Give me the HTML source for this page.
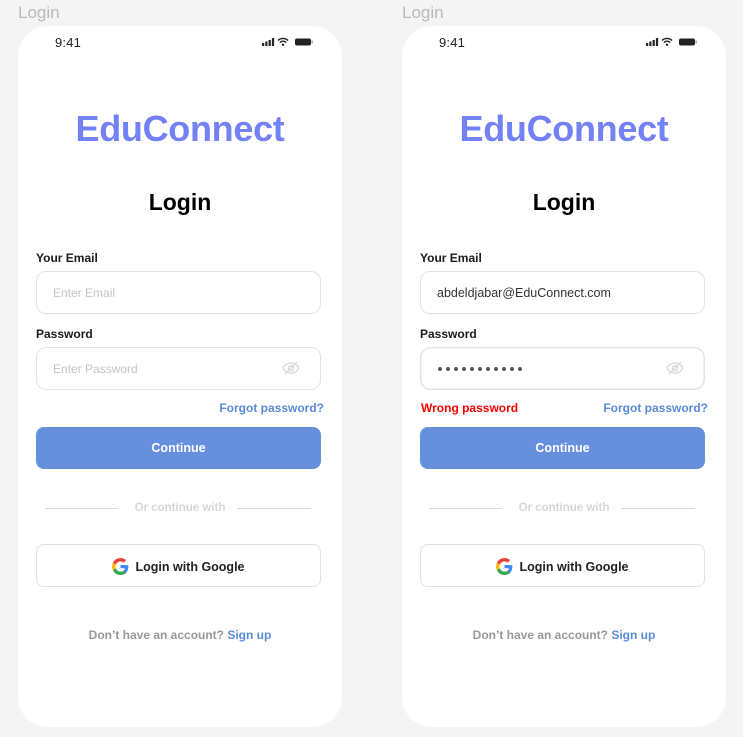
<!DOCTYPE html>
<html><head><meta charset="utf-8">
<style>
*{margin:0;padding:0;box-sizing:border-box}
body{width:743px;height:737px;background:#f4f4f4;position:relative;overflow:hidden;font-family:"Liberation Sans",sans-serif}
.cap{position:absolute;top:3px;font-size:17px;color:#b9b9b9}
.ph{position:absolute;top:26px;width:324px;height:701px;background:#fff;border-radius:30px}
.ph>*{position:absolute}
.time{left:37px;top:9px;font-size:13px;color:#222;letter-spacing:.2px}
.stat{left:244px;top:11px}
.logo{left:0;width:324px;text-align:center;top:82px;font-size:36px;font-weight:bold;color:#7381f6;letter-spacing:-.3px}
.title{left:0;width:324px;text-align:center;top:163px;font-size:23px;font-weight:bold;color:#000}
.lbl{left:18px;font-size:12px;font-weight:bold;color:#1a1a1a}
.inp{left:18px;width:285px;height:43px;border:1.5px solid #e3e3e3;border-radius:10px;font-size:12px;padding-left:16px;line-height:42px;color:#c4c4c4}
.eye{left:264px}
.link{font-size:12px;color:#5b8bdc;font-weight:bold}
.btn{left:18px;width:285px;height:42px;background:#6690de;border-radius:8px;color:#fff;font-weight:bold;font-size:12.5px;text-align:center;line-height:43px}
.line{height:1px;background:#dcdcdc;top:482px}
.or{left:0;width:324px;text-align:center;top:476px;font-size:11.5px;color:#d6d6d6;font-weight:bold}
.gbtn{left:18px;width:285px;height:43px;border:1.5px solid #e0e0e0;border-radius:8px;top:518px;font-size:12.5px;font-weight:bold;color:#222;display:flex;align-items:center;justify-content:center;gap:6px;padding-top:2px}
.foot{left:0;width:324px;text-align:center;top:602px;font-size:12px;color:#999;font-weight:bold}
.foot span{color:#5b8bdc}
</style></head><body>
<div class="cap" style="left:18px">Login</div>
<div class="cap" style="left:402px">Login</div>

<div class="ph" style="left:18px">
 <div class="time">9:41</div>
 <svg class="stat" width="52" height="10" viewBox="0 0 52 10"><rect x="0" y="6" width="2.2" height="3" fill="#222"/><rect x="3.3" y="4.5" width="2.2" height="4.5" fill="#222"/><rect x="6.6" y="3" width="2.2" height="6" fill="#222"/><rect x="9.9" y="1" width="2.2" height="8" fill="#222"/><path d="M16 3.5a7 7 0 0 1 10 0M17.8 5.5a4.5 4.5 0 0 1 6.4 0" stroke="#222" stroke-width="1.4" fill="none"/><circle cx="21" cy="7.8" r="1.2" fill="#222"/><rect x="33" y="1.5" width="16" height="7" rx="2" fill="#222"/><rect x="49.5" y="3.5" width="1.3" height="3" fill="#999"/></svg>
 <div class="logo">EduConnect</div>
 <div class="title">Login</div>
 <div class="lbl" style="top:225px">Your Email</div>
 <div class="inp" style="top:245px">Enter Email</div>
 <div class="lbl" style="top:301px">Password</div>
 <div class="inp" style="top:321px">Enter Password</div>
 <svg class="eye" style="top:335px" width="18" height="14" viewBox="0 0 18 14"><path d="M1 7c2-3.5 4.5-5 8-5s6 1.5 8 5c-2 3.5-4.5 5-8 5s-6-1.5-8-5z" stroke="#d6d6d6" stroke-width="1.2" fill="none"/><circle cx="9" cy="7" r="2.5" stroke="#d6d6d6" stroke-width="1.2" fill="none"/><path d="M3 13L15 1" stroke="#d6d6d6" stroke-width="1.2"/></svg>
 <div class="link" style="right:18px;top:375px">Forgot password?</div>
 <div class="btn" style="top:401px">Continue</div>
 <div class="line" style="left:27px;width:73px"></div>
 <div class="line" style="left:219px;width:74px"></div>
 <div class="or">Or continue with</div>
 <div class="gbtn"><svg width="17" height="17" viewBox="0 0 48 48"><path fill="#EA4335" d="M24 9.5c3.5 0 6.6 1.2 9.1 3.6l6.8-6.8C35.8 2.4 30.3 0 24 0 14.6 0 6.6 5.4 2.7 13.3l7.9 6.1C12.5 13.6 17.8 9.5 24 9.5z"/><path fill="#4285F4" d="M46.1 24.5c0-1.6-.1-3.1-.4-4.5H24v9h12.4c-.5 2.9-2.2 5.300-4.6 6.9l7.7 6c4.4-4.1 6.6-10.2 6.6-17.4z"/><path fill="#FBBC05" d="M10.5 28.6c-.5-1.4-.8-3-.8-4.6s.3-3.2.8-4.6l-7.9-6.1C1 16.6 0 20.2 0 24s1 7.4 2.7 10.7l7.8-6.1z"/><path fill="#34A853" d="M24 48c6.5 0 11.900-2.1 15.9-5.8l-7.7-6c-2.2 1.5-5 2.3-8.2 2.3-6.2 0-11.5-4.2-13.4-9.9l-7.9 6.1C6.6 42.6 14.6 48 24 48z"/></svg>Login with Google</div>
 <div class="foot">Don’t have an account? <span>Sign up</span></div>
</div>

<div class="ph" style="left:402px">
 <div class="time">9:41</div>
 <svg class="stat" width="52" height="10" viewBox="0 0 52 10"><rect x="0" y="6" width="2.2" height="3" fill="#222"/><rect x="3.3" y="4.5" width="2.2" height="4.5" fill="#222"/><rect x="6.6" y="3" width="2.2" height="6" fill="#222"/><rect x="9.9" y="1" width="2.2" height="8" fill="#222"/><path d="M16 3.5a7 7 0 0 1 10 0M17.8 5.5a4.5 4.5 0 0 1 6.4 0" stroke="#222" stroke-width="1.4" fill="none"/><circle cx="21" cy="7.8" r="1.2" fill="#222"/><rect x="33" y="1.5" width="16" height="7" rx="2" fill="#222"/><rect x="49.5" y="3.5" width="1.3" height="3" fill="#999"/></svg>
 <div class="logo">EduConnect</div>
 <div class="title">Login</div>
 <div class="lbl" style="top:225px">Your Email</div>
 <div class="inp" style="top:245px;color:#333;font-size:12.5px">abdeldjabar@EduConnect.com</div>
 <div class="lbl" style="top:301px">Password</div>
 <svg style="left:18px;top:321px" width="285" height="43"><rect x="0.75" y="0.75" width="283.5" height="41.5" rx="10" fill="none" stroke="#e3e3e3" stroke-width="1.5"/><g fill="#555"><circle cx="20" cy="22" r="2"/><circle cx="28" cy="22" r="2"/><circle cx="36" cy="22" r="2"/><circle cx="44" cy="22" r="2"/><circle cx="52" cy="22" r="2"/><circle cx="60" cy="22" r="2"/><circle cx="68" cy="22" r="2"/><circle cx="76" cy="22" r="2"/><circle cx="84" cy="22" r="2"/><circle cx="92" cy="22" r="2"/><circle cx="100" cy="22" r="2"/></g></svg>
 <svg class="eye" style="top:335px" width="18" height="14" viewBox="0 0 18 14"><path d="M1 7c2-3.5 4.5-5 8-5s6 1.5 8 5c-2 3.5-4.5 5-8 5s-6-1.5-8-5z" stroke="#d6d6d6" stroke-width="1.2" fill="none"/><circle cx="9" cy="7" r="2.5" stroke="#d6d6d6" stroke-width="1.2" fill="none"/><path d="M3 13L15 1" stroke="#d6d6d6" stroke-width="1.2"/></svg>
 <div class="link" style="left:19px;top:375px;color:#f00">Wrong password</div>
 <div class="link" style="right:18px;top:375px">Forgot password?</div>
 <div class="btn" style="top:401px">Continue</div>
 <div class="line" style="left:27px;width:73px"></div>
 <div class="line" style="left:219px;width:74px"></div>
 <div class="or">Or continue with</div>
 <div class="gbtn"><svg width="17" height="17" viewBox="0 0 48 48"><path fill="#EA4335" d="M24 9.5c3.5 0 6.6 1.2 9.1 3.6l6.8-6.8C35.8 2.4 30.3 0 24 0 14.6 0 6.6 5.4 2.7 13.3l7.9 6.1C12.5 13.6 17.8 9.5 24 9.5z"/><path fill="#4285F4" d="M46.1 24.5c0-1.6-.1-3.1-.4-4.5H24v9h12.4c-.5 2.9-2.2 5.3-4.6 6.9l7.7 6c4.4-4.1 6.6-10.2 6.6-17.4z"/><path fill="#FBBC05" d="M10.5 28.6c-.5-1.4-.8-3-.8-4.6s.3-3.2.8-4.6l-7.9-6.1C1 16.6 0 20.2 0 24s1 7.4 2.7 10.7l7.8-6.1z"/><path fill="#34A853" d="M24 48c6.5 0 11.9-2.1 15.9-5.8l-7.7-6c-2.2 1.5-5 2.3-8.2 2.3-6.2 0-11.5-4.2-13.4-9.9l-7.9 6.1C6.6 42.6 14.6 48 24 48z"/></svg>Login with Google</div>
 <div class="foot">Don’t have an account? <span>Sign up</span></div>
</div>
</body></html>
